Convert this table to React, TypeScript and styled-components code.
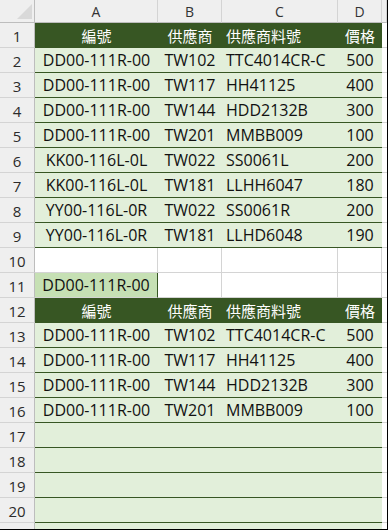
import React from "react";
import styled, { createGlobalStyle, css } from "styled-components";

const GlobalStyle = createGlobalStyle`
  html, body { margin: 0; padding: 0; background: #ffffff; }
  * { box-sizing: border-box; }
`;

const GREEN_DARK = "#375623";
const GREEN_LIGHT = "#E2EFDA";
const GREEN_SEL = "#C6E0B4";
const GRID = "#d4d4d4";
const HEAD_BG = "#efefef";
const HEAD_LINE = "#bdbdbd";

const Frame = styled.div`
  width: 388px;
  height: 530px;
  border-right: 1px solid #000;
  border-bottom: 1px solid #000;
  overflow: hidden;
`;

const Sheet = styled.div`
  display: grid;
  grid-template-columns: 35px 123px 64px 116px 44px 5px;
  grid-template-rows: 23px;
  grid-auto-rows: 25px;
  font-family: "Open Sans", "Noto Sans CJK TC", sans-serif;
`;

const Corner = styled.div`
  background: ${HEAD_BG};
  border-right: 1px solid ${HEAD_LINE};
  border-bottom: 1px solid ${HEAD_LINE};
  display: flex;
  align-items: flex-end;
  justify-content: flex-end;
  padding: 0 2px 3px 0;
`;

const ColHead = styled.div`
  background: ${HEAD_BG};
  border-right: 1px solid ${GRID};
  border-bottom: 1px solid ${HEAD_LINE};
  display: flex;
  align-items: center;
  justify-content: center;
  font-size: 14px;
  color: #333;
`;

const RowHead = styled.div`
  background: ${HEAD_BG};
  border-right: 1px solid ${HEAD_LINE};
  border-bottom: 1px solid ${GRID};
  display: flex;
  align-items: center;
  justify-content: center;
  font-size: 15px;
  color: #2b2b2b;
  padding-top: 1px;
`;

type Kind = "th" | "td" | "blank" | "sel" | "edge";
type Align = "center" | "left";

const Cell = styled.div<{ $kind: Kind; $align?: Align }>`
  display: flex;
  align-items: center;
  justify-content: ${(p) => (p.$align === "left" ? "flex-start" : "center")};
  padding-left: ${(p) => (p.$align === "left" ? "4px" : "0")};
  white-space: nowrap;
  overflow: hidden;
  font-size: 16px;
  color: #111;
  ${(p) =>
    p.$kind === "th" &&
    css`
      background: ${GREEN_DARK};
      color: #ffffff;
      font-size: 15px;
      border-bottom: 1px solid ${GREEN_DARK};
    `}
  ${(p) =>
    p.$kind === "td" &&
    css`
      background: ${GREEN_LIGHT};
      border-bottom: 1px solid ${GREEN_DARK};
    `}
  ${(p) =>
    p.$kind === "blank" &&
    css`
      background: #ffffff;
      border-right: 1px solid ${GRID};
      border-bottom: 1px solid ${GRID};
    `}
  ${(p) =>
    p.$kind === "sel" &&
    css`
      background: ${GREEN_SEL};
      border-right: 1px solid ${GREEN_DARK};
      border-bottom: 1px solid ${GRID};
    `}
  ${(p) =>
    p.$kind === "edge" &&
    css`
      background: #ffffff;
      border-bottom: 1px solid ${GRID};
    `}
`;

const CornerMark = () => (
  <svg width="15" height="15" viewBox="0 0 15 15">
    <polygon points="0,15 15,15 15,0" fill="#d9d9d9" />
  </svg>
);

const HEAD = ["編號", "供應商", "供應商料號", "價格"];
const ALIGNS: Align[] = ["center", "center", "left", "center"];

type Row =
  | { type: "th" }
  | { type: "td"; data?: string[] }
  | { type: "blank" }
  | { type: "sel"; value: string };

const ROWS: Row[] = [
  { type: "th" },
  { type: "td", data: ["DD00-111R-00", "TW102", "TTC4014CR-C", "500"] },
  { type: "td", data: ["DD00-111R-00", "TW117", "HH41125", "400"] },
  { type: "td", data: ["DD00-111R-00", "TW144", "HDD2132B", "300"] },
  { type: "td", data: ["DD00-111R-00", "TW201", "MMBB009", "100"] },
  { type: "td", data: ["KK00-116L-0L", "TW022", "SS0061L", "200"] },
  { type: "td", data: ["KK00-116L-0L", "TW181", "LLHH6047", "180"] },
  { type: "td", data: ["YY00-116L-0R", "TW022", "SS0061R", "200"] },
  { type: "td", data: ["YY00-116L-0R", "TW181", "LLHD6048", "190"] },
  { type: "blank" },
  { type: "sel", value: "DD00-111R-00" },
  { type: "th" },
  { type: "td", data: ["DD00-111R-00", "TW102", "TTC4014CR-C", "500"] },
  { type: "td", data: ["DD00-111R-00", "TW117", "HH41125", "400"] },
  { type: "td", data: ["DD00-111R-00", "TW144", "HDD2132B", "300"] },
  { type: "td", data: ["DD00-111R-00", "TW201", "MMBB009", "100"] },
  { type: "td" },
  { type: "td" },
  { type: "td" },
  { type: "td" },
  { type: "td" },
];

// Only rows 1-20 are fully visible; the partial last row shows no label.
const VISIBLE_LABELS = 20;

function renderCells(row: Row, r: number) {
  const cells: React.ReactNode[] = [];
  for (let c = 0; c < 4; c++) {
    const key = `${r}-${c}`;
    if (row.type === "th") {
      cells.push(
        <Cell key={key} $kind="th" $align={ALIGNS[c]}>
          {HEAD[c]}
        </Cell>
      );
    } else if (row.type === "td") {
      cells.push(
        <Cell key={key} $kind="td" $align={ALIGNS[c]}>
          {row.data ? row.data[c] : ""}
        </Cell>
      );
    } else if (row.type === "sel" && c === 0) {
      cells.push(
        <Cell key={key} $kind="sel">
          {row.value}
        </Cell>
      );
    } else {
      cells.push(<Cell key={key} $kind="blank" />);
    }
  }
  cells.push(<Cell key={`${r}-e`} $kind="edge" />);
  return cells;
}

export default function App() {
  return (
    <>
      <GlobalStyle />
      <Frame>
        <Sheet>
          <Corner>
            <CornerMark />
          </Corner>
          {["A", "B", "C", "D"].map((l) => (
            <ColHead key={l}>{l}</ColHead>
          ))}
          <ColHead />
          {ROWS.map((row, i) => (
            <React.Fragment key={i}>
              <RowHead>{i < VISIBLE_LABELS ? i + 1 : ""}</RowHead>
              {renderCells(row, i)}
            </React.Fragment>
          ))}
        </Sheet>
      </Frame>
    </>
  );
}
